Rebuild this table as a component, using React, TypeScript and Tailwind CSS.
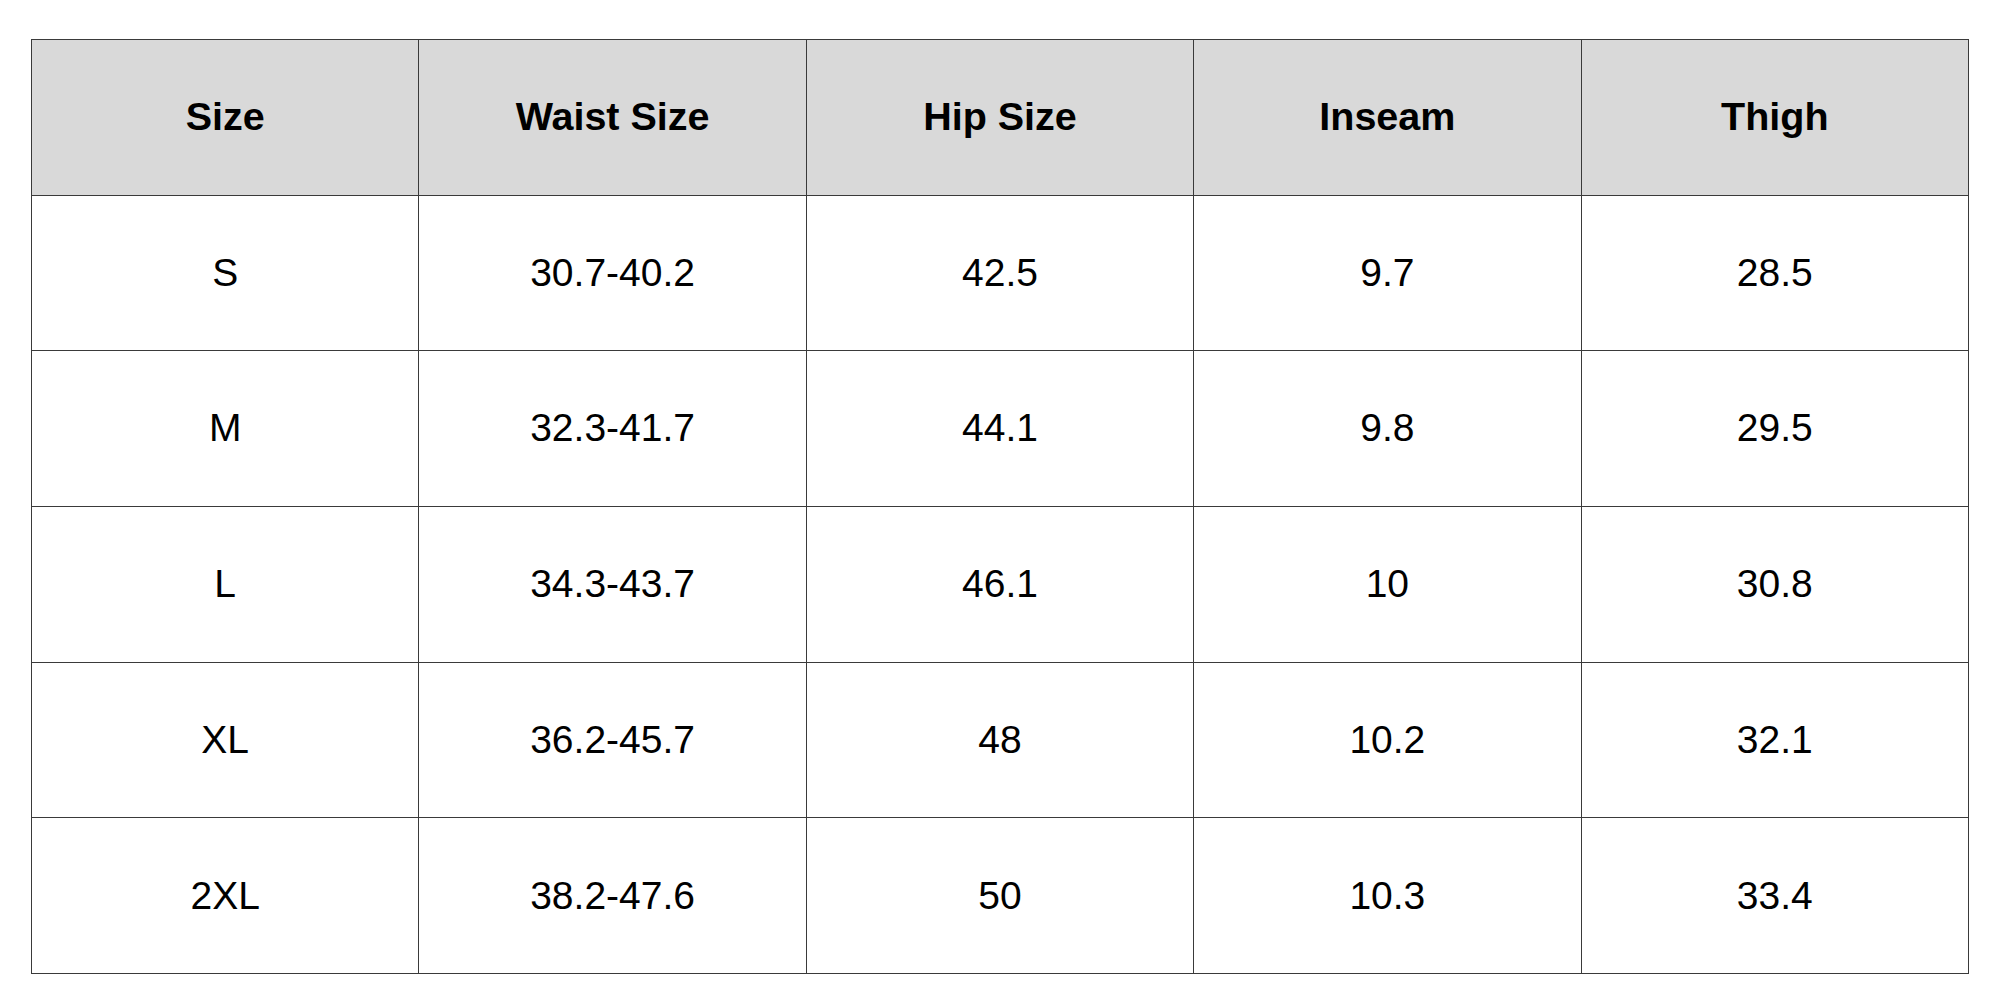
const headers = ["Size", "Waist Size", "Hip Size", "Inseam", "Thigh"];

const rows = [
  ["S", "30.7-40.2", "42.5", "9.7", "28.5"],
  ["M", "32.3-41.7", "44.1", "9.8", "29.5"],
  ["L", "34.3-43.7", "46.1", "10", "30.8"],
  ["XL", "36.2-45.7", "48", "10.2", "32.1"],
  ["2XL", "38.2-47.6", "50", "10.3", "33.4"],
];

export default function App() {
  return (
    <div className="min-h-screen bg-white pt-[39px] pl-[31px] font-['Liberation_Sans',Arial,sans-serif] text-black">
      <table className="w-[1938px] table-fixed border-collapse">
        <thead>
          <tr className="h-[155.7px] bg-[#d9d9d9]">
            {headers.map((h) => (
              <th key={h} className="border border-[#3a3a3a] pb-[2px] text-center align-middle text-[39.5px] font-bold">
                {h}
              </th>
            ))}
          </tr>
        </thead>
        <tbody>
          {rows.map((row) => (
            <tr key={row[0]} className="h-[155.7px]">
              {row.map((cell, i) => (
                <td key={i} className="border border-[#3a3a3a] text-center align-middle text-[39px]">
                  {cell}
                </td>
              ))}
            </tr>
          ))}
        </tbody>
      </table>
    </div>
  );
}
